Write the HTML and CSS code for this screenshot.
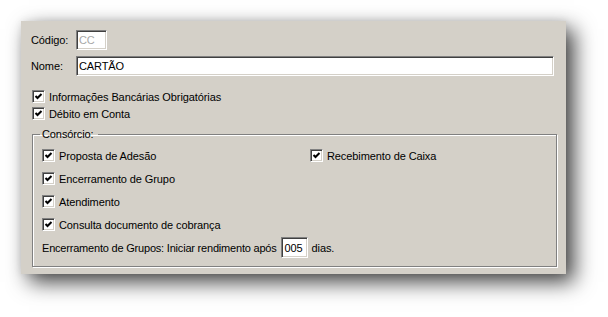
FILE: index.html
```html
<!DOCTYPE html>
<html lang="pt">
<head>
<meta charset="utf-8">
<title>Forma de pagamento</title>
<link rel="stylesheet" href="styles.css">
</head>
<body>
<div class="page">
<div class="panel">
  <div class="field field-code">
    <span class="lbl">Código:</span>
    <span class="input input-code">CC</span>
  </div>
  <div class="field field-name">
    <span class="lbl">Nome:</span>
    <span class="input input-name">CARTÃO</span>
  </div>
  <div class="checks">
    <div class="chk"><span class="box"><svg viewBox="0 0 9 9" width="9" height="9"><polyline points="1.5,4 3.5,6 7.5,2" fill="none" stroke="#000" stroke-width="2"/></svg></span><span>Informações Bancárias Obrigatórias</span></div>
    <div class="chk"><span class="box"><svg viewBox="0 0 9 9" width="9" height="9"><polyline points="1.5,4 3.5,6 7.5,2" fill="none" stroke="#000" stroke-width="2"/></svg></span><span>Débito em Conta</span></div>
  </div>
  <fieldset class="group">
    <legend class="legend">Consórcio:</legend>
    <div class="grid">
      <div class="chk"><span class="box"><svg viewBox="0 0 9 9" width="9" height="9"><polyline points="1.5,4 3.5,6 7.5,2" fill="none" stroke="#000" stroke-width="2"/></svg></span><span>Proposta de Adesão</span></div>
      <div class="chk"><span class="box"><svg viewBox="0 0 9 9" width="9" height="9"><polyline points="1.5,4 3.5,6 7.5,2" fill="none" stroke="#000" stroke-width="2"/></svg></span><span>Recebimento de Caixa</span></div>
      <div class="chk"><span class="box"><svg viewBox="0 0 9 9" width="9" height="9"><polyline points="1.5,4 3.5,6 7.5,2" fill="none" stroke="#000" stroke-width="2"/></svg></span><span>Encerramento de Grupo</span></div>
      <div></div>
      <div class="chk"><span class="box"><svg viewBox="0 0 9 9" width="9" height="9"><polyline points="1.5,4 3.5,6 7.5,2" fill="none" stroke="#000" stroke-width="2"/></svg></span><span>Atendimento</span></div>
      <div></div>
      <div class="chk"><span class="box"><svg viewBox="0 0 9 9" width="9" height="9"><polyline points="1.5,4 3.5,6 7.5,2" fill="none" stroke="#000" stroke-width="2"/></svg></span><span>Consulta documento de cobrança</span></div>
      <div></div>
    </div>
    <div class="days">
      <span class="days-text">Encerramento de Grupos: Iniciar rendimento após</span>
      <span class="input input-days">005</span>
      <span>dias.</span>
    </div>
  </fieldset>
</div>
</div>
</body>
</html>
```

FILE: styles.css
```css
html, body {
  margin: 0;
  background: #fff;
}
body {
  font-family: "Liberation Sans", Arial, sans-serif;
  font-size: 11px;
  letter-spacing: -0.1px;
  color: #000;
}
.page {
  padding: 21px 0 43px 21px;
  min-height: 317px;
  box-sizing: border-box;
}
.panel {
  width: 545px;
  height: 253px;
  box-sizing: border-box;
  background: #d4d0c8;
  padding: 9px 9px 0 10px;
  box-shadow: 8px 8px 20px rgba(0, 0, 0, 0.75), 0 0 8px rgba(0, 0, 0, 0.08);
}
.field {
  display: flex;
  align-items: center;
  height: 20px;
}
.field-code {
  margin-bottom: 6px;
}
.lbl {
  width: 45px;
  flex: none;
}
.input {
  box-sizing: border-box;
  height: 20px;
  border: 1px solid;
  border-color: #808080 #fff #fff #808080;
  box-shadow: inset 1px 1px 0 #404040, inset -1px -1px 0 #d4d0c8;
  background: #fff;
  padding: 0 0 0 2px;
  display: flex;
  align-items: center;
  flex: none;
}
.input-code {
  width: 31px;
  color: #a8a8a8;
}
.input-name {
  width: 478px;
}
.checks {
  margin-top: 12px;
  margin-left: 1px;
}
.chk {
  display: flex;
  align-items: center;
  gap: 4px;
  height: 17px;
}
.box {
  box-sizing: border-box;
  width: 13px;
  height: 13px;
  border: 1px solid;
  border-color: #808080 #fff #fff #808080;
  box-shadow: inset 1px 1px 0 #404040, inset -1px -1px 0 #d4d0c8;
  background: #fff;
  display: flex;
  align-items: center;
  justify-content: center;
  flex: none;
}
.box svg {
  display: block;
}
.group {
  margin: 6px 0 0 1px;
  padding: 3px 7px 7px 7px;
  border: 1px solid #808080;
  box-shadow: 1px 1px 0 #fff, inset 1px 1px 0 #fff;
  min-width: 0;
}
.legend {
  padding: 0 4px 0 2px;
  line-height: 13px;
  margin: 0;
}
.grid {
  display: grid;
  grid-template-columns: 268px auto;
  grid-auto-rows: 23px;
  margin-left: 2px;
}
.grid .chk {
  height: 23px;
}
.days {
  display: flex;
  align-items: center;
  height: 23px;
  margin-left: 2px;
}
.days-text {
  letter-spacing: -0.2px;
}
.input-days {
  width: 27px;
  height: 21px;
  margin: 0 4px 0 4px;
  padding-left: 3px;
}
```
